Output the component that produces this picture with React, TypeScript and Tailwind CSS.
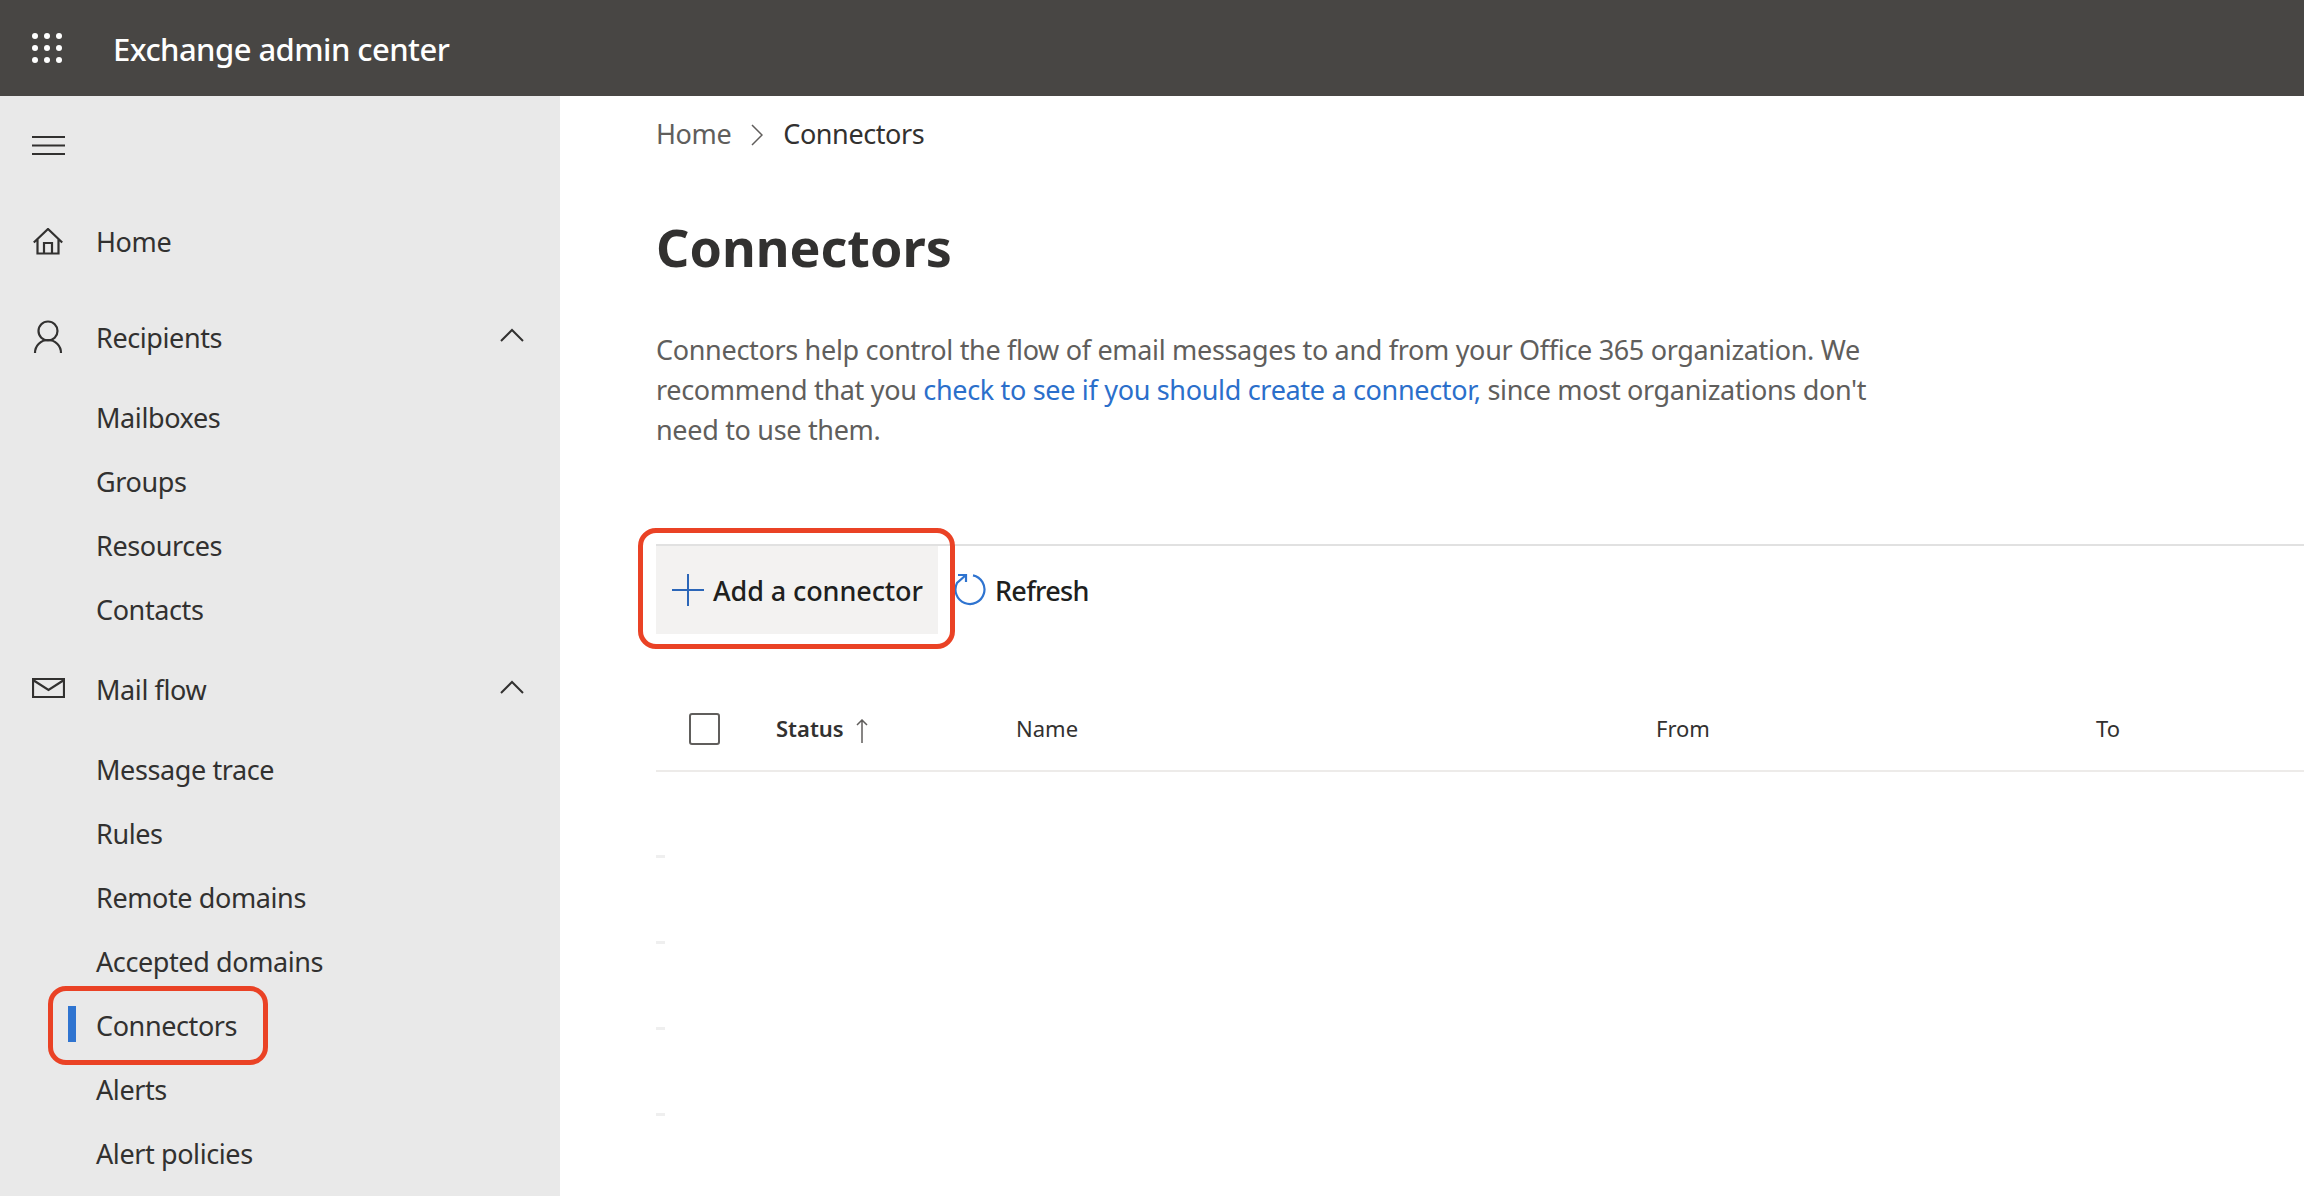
import React from "react";

const font = { fontFamily: '"Noto Sans", sans-serif' };

function Waffle() {
  const c = [3, 15, 27];
  return (
    <svg width="30" height="30" viewBox="0 0 30 30" fill="#fff">
      {c.map((y) => c.map((x) => <circle key={`${x}-${y}`} cx={x} cy={y} r="3" />))}
    </svg>
  );
}

function Chevron() {
  return (
    <svg width="24" height="14" viewBox="0 0 24 14" fill="none" stroke="#323130" strokeWidth="2">
      <path d="M1 13 12 2l11 11" />
    </svg>
  );
}

function Row({ label, tall = false, icon, chevron, children }: { label: string; tall?: boolean; icon?: React.ReactNode; chevron?: boolean; children?: React.ReactNode }) {
  return (
    <div className={`relative flex items-center text-[27px] tracking-[-0.4px] text-[#323130] ${tall ? "h-24" : "h-16"}`}>
      <div className="flex w-[96px] shrink-0 justify-center">{icon}</div>
      <span>{label}</span>
      {chevron ? <div className="ml-auto mr-[36px] -translate-y-[3px]"><Chevron /></div> : null}
      {children}
    </div>
  );
}

export default function App() {
  return (
    <div className="flex h-[1196px] w-[2304px] flex-col overflow-hidden bg-white" style={font}>
      <header className="flex h-24 shrink-0 items-center bg-[#484644] pl-[32px] text-white">
        <Waffle />
        <span className="ml-[51px] pt-[3px] text-[31px] font-medium tracking-[-0.55px]">Exchange admin center</span>
      </header>
      <div className="flex min-h-0 flex-1">
        <aside className="w-[560px] shrink-0 bg-[#e9e9e9]">
          <div className="flex h-[98px] items-center pl-[32px]">
            <svg width="33" height="19" viewBox="0 0 33 19" stroke="#323130" strokeWidth="2"><path d="M0 1h33M0 9.500h33M0 18h33" /></svg>
          </div>
          <Row label="Home" tall icon={
            <svg width="30" height="28" viewBox="0 0 30 28" fill="none" stroke="#323130" strokeWidth="2.200"><path d="M0.800 14.500 15 1l14.200 13.500M4.500 11v14.500h21V11M11 25.500V15h8v10.500" /></svg>
          } />
          <Row label="Recipients" tall chevron icon={
            <svg width="30" height="36" viewBox="0 0 30 36" fill="none" stroke="#323130" strokeWidth="2.200"><circle cx="15" cy="11" r="9.500" /><path d="M2 33a13 13 0 0 1 26 0" /></svg>
          } />
          {["Mailboxes", "Groups", "Resources", "Contacts"].map((l) => <Row key={l} label={l} />)}
          <Row label="Mail flow" tall chevron icon={
            <svg width="33" height="24" viewBox="0 0 33 24" fill="none" stroke="#323130" strokeWidth="2.200"><path d="M1 1h31v18H1zM1 2l15.500 10L32 2" /></svg>
          } />
          {["Message trace", "Rules", "Remote domains", "Accepted domains"].map((l) => <Row key={l} label={l} />)}
          <Row label="Connectors">
            <div className="absolute left-[68px] top-[12px] h-[36px] w-[8px] bg-[#2f74d0]" />
            <div className="absolute left-[48px] top-[-8px] h-[79px] w-[220px] rounded-[18px] border-[5px] border-[#ea4225]" />
          </Row>
          {["Alerts", "Alert policies"].map((l) => <Row key={l} label={l} />)}
        </aside>
        <main className="min-w-0 flex-1 pl-[96px]">
          <nav className="flex h-[77px] items-center text-[27px] tracking-[-0.4px]">
            <span className="text-[#605e5c]">Home</span>
            <svg className="mx-[20px]" width="12" height="22" viewBox="0 0 12 22" fill="none" stroke="#605e5c" strokeWidth="1.500"><path d="M1 1l10 10L1 21" /></svg>
            <span className="text-[#323130]">Connectors</span>
          </nav>
          <h1 className="mt-[44px] h-[60px] text-[52px] font-bold leading-[60px] text-[#323130]">Connectors</h1>
          <p className="mt-[53px] w-[1230px] text-[27px] leading-[40px] tracking-[-0.32px] text-[#605e5c]">
            Connectors help control the flow of email messages to and from your Office 365 organization. We recommend that you <span className="text-[#2b6fcb]">check to see if you should create a connector,</span> since most organizations don't need to use them.
          </p>
          <div className="relative mt-[94px] flex h-[90px] items-center border-t-2 border-[#e1e1e1] text-[27px] text-[#201f1e]">
            <button className="flex h-[88px] w-[282px] items-center gap-[9px] bg-[#f3f2f1] pl-[16px] font-medium tracking-[-0.1px]">
              <svg width="32" height="32" viewBox="0 0 32 32" stroke="#2b66b8" strokeWidth="2"><path d="M0 16h32M16 0v32" /></svg>
              <span className="pt-[2px]">Add a connector</span>
            </button>
            <button className="ml-[16px] flex items-center gap-[9px] font-medium tracking-[-0.7px]">
              <svg width="32" height="32" viewBox="0 0 32 32" fill="none" stroke="#2f74d0" strokeWidth="2.200"><path d="M19 1.300A14.500 14.500 0 1 1 3 9L12 1" /><path d="M4 1h8v7" /></svg>
              <span className="pt-[2px]">Refresh</span>
            </button>
            <div className="absolute left-[-18px] top-[-18px] h-[121px] w-[317px] rounded-[18px] border-[5px] border-[#ea4225]" />
          </div>
          <div className="mt-[56px] grid h-[82px] grid-cols-[120px_240px_640px_440px_1fr] items-center border-b-2 border-[#edebe9] pb-[3px] text-[22px] text-[#323130]">
            <div className="pl-[33px]"><div className="h-[32px] w-[31px] rounded-[3px] border-2 border-[#605e5c]" /></div>
            <div className="flex items-center gap-[12px] font-semibold">
              Status
              <svg className="translate-y-[2px]" width="12" height="24" viewBox="0 0 12 24" fill="none" stroke="#605e5c" strokeWidth="1.500"><path d="M6 24V1M1 6l5-5 5 5" /></svg>
            </div>
            <div>Name</div>
            <div>From</div>
            <div>To</div>
          </div>
          {[0, 1, 2, 3].map((i) => (
            <div key={i} className="flex h-[86px] items-end">
              <div className="h-[3px] w-[9px] bg-[#efefef]" />
            </div>
          ))}
        </main>
      </div>
    </div>
  );
}
